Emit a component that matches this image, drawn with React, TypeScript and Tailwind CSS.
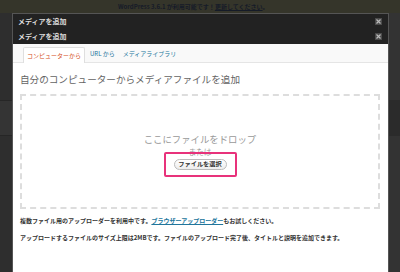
import React from 'react';

const font = { fontFamily: '"Noto Sans CJK JP", "Noto Sans", sans-serif' };

const CloseIcon: React.FC = () => (
  <span className="w-[7px] h-[7px] bg-[#4a4a4a] flex items-center justify-center">
    <svg width="5" height="5" viewBox="0 0 5 5">
      <path d="M0.5 0.5L4.5 4.5M4.5 0.5L0.5 4.5" stroke="#bbb" strokeWidth="1.2" />
    </svg>
  </span>
);

const ModalHeader: React.FC<{ title: string }> = ({ title }) => (
  <div className="h-[15px] bg-[#222] flex items-center justify-between pl-[5px] pr-[6px]">
    <span className="text-[7px] leading-none font-bold text-[#ddd]">{title}</span>
    <CloseIcon />
  </div>
);

export default function App() {
  return (
    <div className="w-[400px] h-[272px] bg-[#333] overflow-hidden flex flex-col" style={font}>
      {/* update notice behind the overlay */}
      <div className="h-[13px] shrink-0 bg-[#35352a] flex items-center pl-[118px]">
        <span className="text-[6px] leading-none font-bold text-[#151b28] whitespace-nowrap">
          WordPress 3.6.1 が利用可能です！<span className="underline">更新してください</span>。
        </span>
      </div>

      <div className="flex flex-1 min-h-0">
        {/* admin side menu (dimmed) */}
        <div className="w-[12px] shrink-0 bg-[#2e2e2e] flex flex-col">
          <div className="h-[87px]" />
          <div className="h-[36px] bg-[#343434] border-y border-[#262626]" />
        </div>

        {/* modal */}
        <div className="flex-1 flex flex-col border-x border-t border-[#555] bg-white">
          <ModalHeader title="メディアを追加" />
          <ModalHeader title="メディアを追加" />

          {/* tabs */}
          <div className="h-[19px] shrink-0 bg-[#f9f9f9] border-b border-[#e5e5e5] flex items-end pl-[10px] gap-[5px]">
            <div className="h-[16px] px-[3px] bg-white border border-b-0 border-[#dfdfdf] rounded-t-[2px] flex items-center -mb-px">
              <span className="text-[6px] leading-none text-[#d54e21]">コンピューターから</span>
            </div>
            <div className="h-[16px] flex items-center gap-[8px]">
              <span className="text-[6px] leading-none text-[#21759b]">URL から</span>
              <span className="text-[6px] leading-none text-[#21759b]">メディアライブラリ</span>
            </div>
          </div>

          {/* content */}
          <div className="flex-1 pl-[7px] pr-[8px] pt-[10px]">
            <h3 className="text-[9.6px] leading-[12px] text-[#636363]">
              自分のコンピューターからメディアファイルを追加
            </h3>

            <div className="mt-[9px] h-[115px] border-2 border-dashed border-[#ddd] flex flex-col items-center pt-[37px]">
              <p className="text-[9.4px] leading-[12px] text-[#999]">ここにファイルをドロップ</p>
              <p className="mt-[2px] text-[7.5px] leading-[9px] text-[#999]">または</p>
              <div className="relative mt-[3px]">
                <button className="w-[53px] h-[11px] rounded-full border border-[#bbb] bg-gradient-to-b from-white to-[#ededed] flex items-center justify-center">
                  <span className="text-[6.2px] leading-none font-bold text-[#333]">ファイルを選択</span>
                </button>
                <div className="absolute -inset-x-[10px] -inset-y-[7px] border-2 border-[#e8327b] rounded-[2px] pointer-events-none" />
              </div>
            </div>

            <p className="mt-[8px] text-[6px] leading-[8px] font-bold text-[#333] whitespace-nowrap">
              複数ファイル用のアップローダーを利用中です。
              <span className="text-[#21759b] underline">ブラウザーアップローダー</span>
              もお試しください。
            </p>
            <p className="mt-[9px] text-[6px] leading-[8px] font-bold text-[#333] whitespace-nowrap">
              アップロードするファイルのサイズ上限は2MBです。ファイルのアップロード完了後、タイトルと説明を追加できます。
            </p>
          </div>
        </div>

        {/* right strip (dimmed page) */}
        <div className="w-[11px] shrink-0 bg-[#333] flex flex-col">
          <div className="h-[87px]" />
          <div className="h-[36px] bg-[#2b2b2b]" />
        </div>
      </div>
    </div>
  );
}
